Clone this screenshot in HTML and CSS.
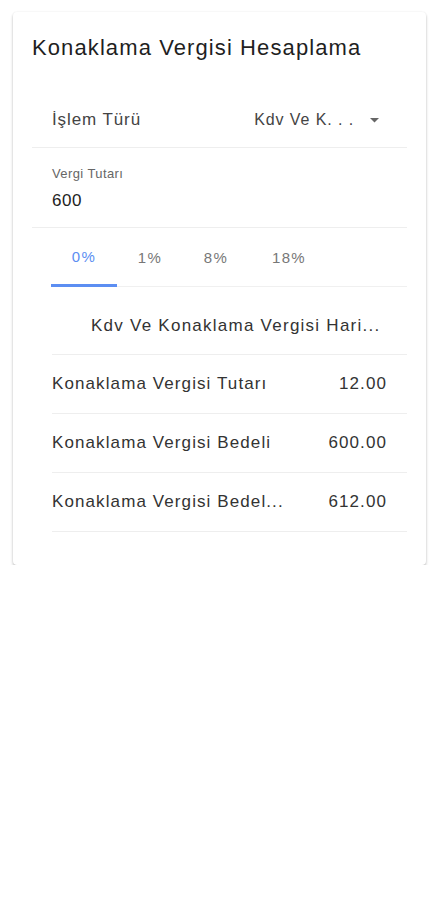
FILE: index.html
```html
<!DOCTYPE html>
<html lang="tr">
<head>
<meta charset="utf-8">
<link rel="stylesheet" href="styles.css">
</head>
<body>
<div class="card">
  <h1 class="title">Konaklama Vergisi Hesaplama</h1>
  <div class="select-row">
    <span class="select-label">İşlem Türü</span>
    <span class="select-value">
      <span class="select-text">Kdv Ve K. . .</span>
      <svg class="caret" width="9" height="5" viewBox="0 0 9 5"><path d="M0 0 L9 0 L4.5 4.5 Z" fill="#666"/></svg>
    </span>
  </div>
  <div class="field">
    <div class="field-label">Vergi Tutarı</div>
    <div class="field-value">600</div>
  </div>
  <div class="tabs">
    <div class="tab active">0%</div>
    <div class="tab">1%</div>
    <div class="tab">8%</div>
    <div class="tab wide">18%</div>
  </div>
  <div class="results">
    <div class="result-head">Kdv Ve Konaklama Vergisi Hari...</div>
    <div class="result-row"><span class="r-label">Konaklama Vergisi Tutarı</span><span class="r-value">12.00</span></div>
    <div class="result-row"><span class="r-label">Konaklama Vergisi Bedeli</span><span class="r-value">600.00</span></div>
    <div class="result-row"><span class="r-label">Konaklama Vergisi Bedel...</span><span class="r-value">612.00</span></div>
  </div>
</div>
</body>
</html>
```
FILE: styles.css
```css
* { box-sizing: border-box; }
html, body { margin: 0; padding: 0; background: #fff; }
body {
  font-family: "Liberation Sans", Arial, sans-serif;
  color: #333;
  padding: 12px 12px 0 13px;
}
.card {
  width: 413px;
  height: 553px;
  background: #fff;
  border-radius: 4px;
  box-shadow: 0 2px 3px rgba(0,0,0,0.24), 0 0 2px rgba(0,0,0,0.08);
  padding: 21px 19px 0 19px;
}
.title {
  margin: 0;
  font-size: 22px;
  font-weight: 400;
  line-height: 30px;
  color: #1f1f1f;
  letter-spacing: 1.1px;
}
.select-row {
  margin-top: 29px;
  height: 56px;
  display: flex;
  align-items: center;
  justify-content: space-between;
  padding: 0 28px 0 20px;
  border-bottom: 1px solid #eee;
  color: #444;
}
.select-label { font-size: 17px; letter-spacing: 0.9px; }
.select-value { display: flex; align-items: center; gap: 16px; font-size: 16px; letter-spacing: 0.9px; }
.caret { margin-top: 1px; }
.field {
  height: 80px;
  padding: 18px 20px 0 20px;
  border-bottom: 1px solid #eee;
}
.field-label { font-size: 13px; color: #666; line-height: 16px; letter-spacing: 0.4px; }
.field-value { font-size: 17px; color: #222; line-height: 20px; margin-top: 9px; letter-spacing: 0.5px; }
.tabs {
  margin: 0 0 0 19px;
  height: 59px;
  display: flex;
  border-bottom: 1px solid #f0f0f0;
}
.tab {
  width: 66px;
  display: flex;
  align-items: center;
  justify-content: center;
  font-size: 15px;
  color: #777;
  padding-bottom: 0;
  letter-spacing: 1.3px;
}
.tab.wide { width: 80px; }
.tab.active {
  color: #5c8ef2;
  border-bottom: 3px solid #5c8ef2;
  margin-bottom: -1px;
  padding-bottom: 0;
}
.results { margin-left: 20px; }
.result-head {
  height: 68px;
  display: flex;
  align-items: center;
  padding: 10px 0 0 39px;
  font-size: 17px;
  color: #333;
  border-bottom: 1px solid #eee;
  letter-spacing: 1.25px;
}
.result-row {
  height: 59px;
  display: flex;
  align-items: center;
  justify-content: space-between;
  padding: 0 20px 0 0;
  border-bottom: 1px solid #eee;
  font-size: 17px;
  color: #333;
  letter-spacing: 1.1px;
}
```
